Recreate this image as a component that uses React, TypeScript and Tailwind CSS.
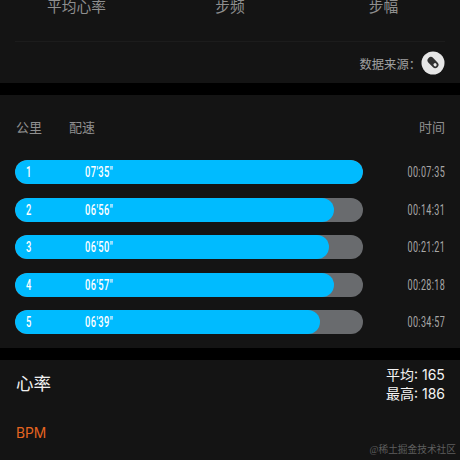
const splits = [
  { km: 1, pace: `07'35"`, time: '00:07:35', width: 348 },
  { km: 2, pace: `06'56"`, time: '00:14:31', width: 318.5 },
  { km: 3, pace: `06'50"`, time: '00:21:21', width: 314 },
  { km: 4, pace: `06'57"`, time: '00:28:18', width: 319 },
  { km: 5, pace: `06'39"`, time: '00:34:57', width: 305 },
]

function SourceIcon() {
  return (
    <svg viewBox="0 0 24 24" className="h-6 w-6">
      <circle cx="12" cy="12" r="11.5" fill="#e6e6e6" />
      <g transform="rotate(46 12 11.6)">
        <rect x="5.6" y="8.3" width="12.8" height="6.6" rx="3.3" fill="#303030" />
        <circle cx="15" cy="11.6" r="1.6" fill="#e6e6e6" />
      </g>
    </svg>
  )
}

export default function App() {
  return (
    <div className="flex h-[460px] w-[460px] flex-col gap-3 overflow-hidden bg-black font-['Inter','Noto_Sans_CJK_SC',sans-serif] text-[#8f8f8f]">
      {/* Summary */}
      <section className="h-[83px] shrink-0 bg-[#141414] px-[15px]">
        <div className="flex h-[42px] border-b border-[#1c1c1c] text-[14.7px] leading-[14px]">
          <span className="w-[123px] text-center">平均心率</span>
          <span className="w-[184px] text-center">步频</span>
          <span className="w-[123px] text-center">步幅</span>
        </div>
        <div className="flex h-[42px] items-center justify-end">
          <span className="pt-[3px] font-['Noto_Sans_CJK_SC',sans-serif] text-[12.3px] text-[#a0a0a0]">数据来源：</span>
          <SourceIcon />
        </div>
      </section>

      {/* Splits */}
      <section className="h-[253px] shrink-0 bg-[#141414] px-[15px] pt-[22px]">
        <div className="flex h-[43.3px] pl-px text-[13px] leading-[20px]">
          <span className="w-[53px]">公里</span>
          <span className="flex-1">配速</span>
          <span>时间</span>
        </div>
        <div className="flex flex-col gap-[13.5px] font-['Roboto',sans-serif] text-[14.6px] font-medium leading-[25px] tracking-[0.6px]">
          {splits.map((split) => (
            <div key={split.km} className="flex h-6 items-center justify-between">
              <div className="h-6 w-[348px] overflow-hidden rounded-full bg-[#696b6e]">
                <div className="flex h-6 rounded-full bg-[#00bbff] pl-[11px] text-white" style={{ width: split.width }}>
                  <span className="w-[59px] origin-left scale-x-[0.64]">{split.km}</span>
                  <span className="origin-left scale-x-[0.64]">{split.pace}</span>
                </div>
              </div>
              <span className="origin-right scale-x-[0.615] pt-px font-normal text-[#a8a8a8]">{split.time}</span>
            </div>
          ))}
        </div>
      </section>

      {/* Heart rate */}
      <section className="flex h-[100px] shrink-0 justify-between bg-[#141414] pl-4 pr-[15px]">
        <div>
          <h2 className="pt-3 text-[17.5px] leading-6 text-[#f0f0f0]">心率</h2>
          <div className="pt-[27px] text-[13.8px] leading-5 text-[#e66420]">BPM</div>
        </div>
        <div className="flex flex-col items-end">
          <div className="pt-[5px] text-[14px] leading-[19px] text-[#f4f4f4]">
            <div>平均: 165</div>
            <div>最高: 186</div>
          </div>
          <div className="-mr-[11px] mt-[39px] font-['Liberation_Serif','Noto_Sans_CJK_SC',serif] text-[9.7px] leading-4 text-[#5e5e5e]">@稀土掘金技术社区</div>
        </div>
      </section>
    </div>
  )
}
